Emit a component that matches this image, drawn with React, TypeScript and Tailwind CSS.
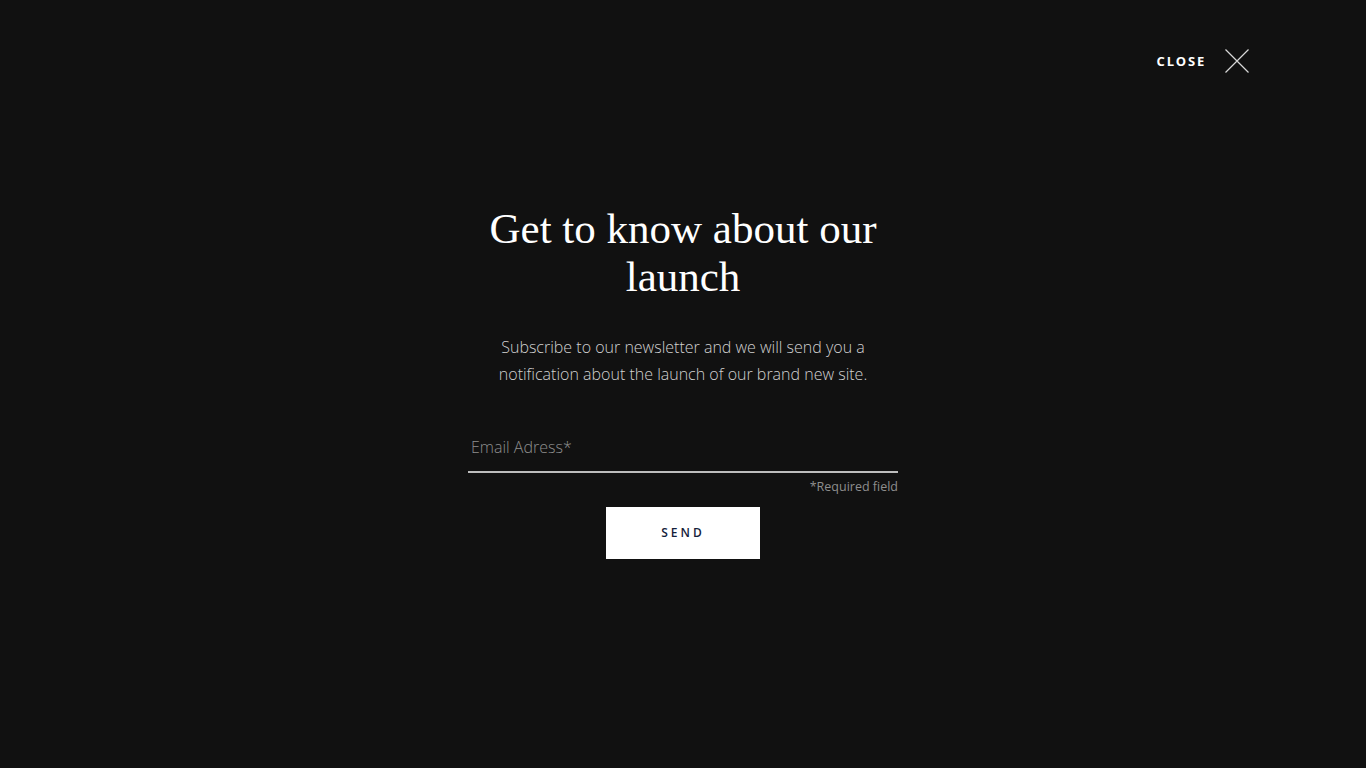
export default function App() {
  return (
    <div className="min-h-screen w-full bg-[#111111] font-['Open_Sans',sans-serif]">
      {/* Top bar */}
      <div className="flex justify-end pt-[49px] pr-[117px]">
        <button className="flex items-center gap-[19px] text-white">
          <span className="text-[13px] font-bold tracking-[1.8px] leading-none">CLOSE</span>
          <svg width="24" height="24" viewBox="0 0 24 24" className="text-[#d8d8d8]">
            <path d="M0.5 0.5 L23.5 23.5 M23.5 0.5 L0.5 23.5" stroke="currentColor" strokeWidth="1.2" fill="none" />
          </svg>
        </button>
      </div>

      {/* Newsletter */}
      <div className="mx-auto w-[430px] pt-[132px] text-center">
        <h1 className="font-['Liberation_Serif',serif] text-[43px] leading-[48px] text-white">
          Get to know about our launch
        </h1>
        <p className="mt-[33px] text-[16px] font-light leading-[27px] text-[#d0d0d0]">
          Subscribe to our newsletter and we will send you a notification about the launch of our brand new site.
        </p>
        <form className="mt-[40px]" onSubmit={(e) => e.preventDefault()}>
          <input
            type="email"
            placeholder="Email Adress*"
            className="block h-[45px] w-full border-b-2 border-[#bdbdbd] bg-transparent px-[3px] pb-[5px] text-[16px] font-light text-white placeholder-[#8e8e8e] outline-none"
          />
          <div className="mt-[6px] text-right text-[12.5px] leading-[16px] text-[#8e8e8e]">*Required field</div>
          <button
            type="submit"
            className="mx-auto mt-[12px] flex h-[52px] w-[154px] items-center justify-center bg-white text-[12px] font-semibold tracking-[3px] text-[#14213a]"
          >
            SEND
          </button>
        </form>
      </div>
    </div>
  );
}
